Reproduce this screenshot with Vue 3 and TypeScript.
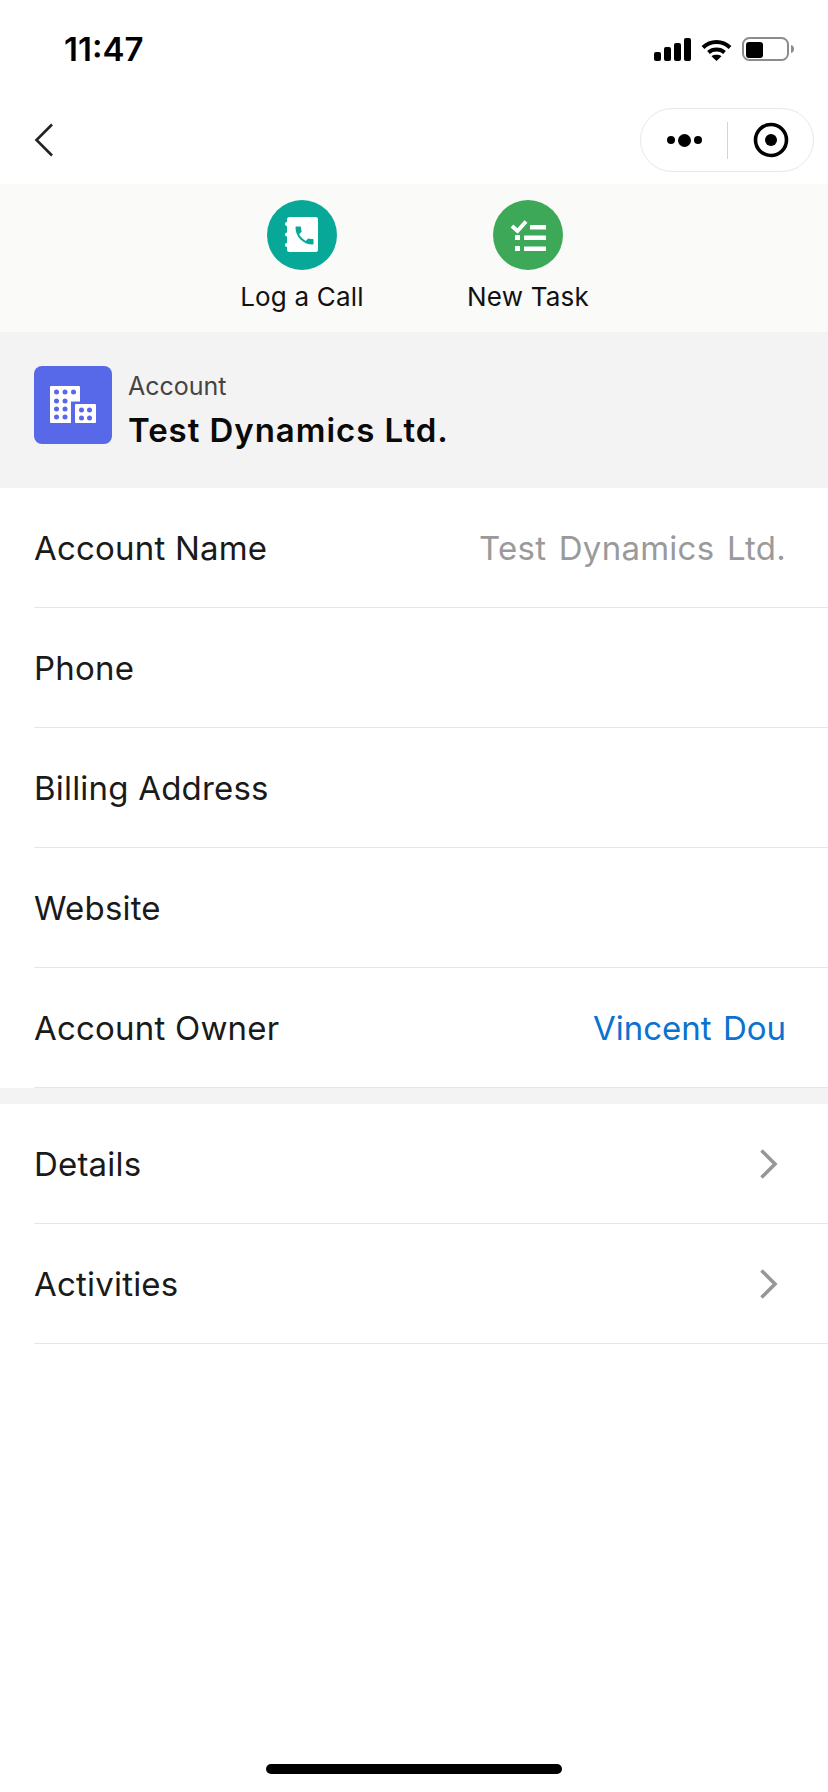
<script setup lang="ts">
interface Row {
  label: string
  value?: string
  link?: boolean
}

const fields: Row[] = [
  { label: 'Account Name', value: 'Test Dynamics Ltd.' },
  { label: 'Phone' },
  { label: 'Billing Address' },
  { label: 'Website' },
  { label: 'Account Owner', value: 'Vincent Dou', link: true },
]

const links: string[] = ['Details', 'Activities']

const bars = [
  { x: 0, h: 9 },
  { x: 10, h: 14 },
  { x: 20, h: 18 },
  { x: 30, h: 23 },
]

const bigDots: [number, number][] = [
  [22.5, 26], [31, 26], [39.5, 26],
  [22.5, 35], [31, 35],
  [22.5, 43], [31, 43],
  [22.5, 51], [31, 51],
]
const smallDots: [number, number][] = [
  [47.5, 44], [55.5, 44],
  [47.5, 52], [55.5, 52],
]
</script>

<template>
  <div class="page">
    <div class="status">
      <span class="time">11:47</span>
      <div class="status-icons">
        <svg width="37" height="23" viewBox="0 0 37 23">
          <rect v-for="b in bars" :key="b.x" :x="b.x" :y="23 - b.h" width="7" :height="b.h" rx="2" fill="#000" />
        </svg>
        <svg width="31" height="24" viewBox="0 0 31 24">
          <path d="M2 10.5C9.5 3.2 21.5 3.2 29 10.5" fill="none" stroke="#000" stroke-width="4" />
          <path d="M7.5 15.5C11.8 11.6 19.2 11.6 23.5 15.5" fill="none" stroke="#000" stroke-width="4" />
          <path d="M10.5 19.2C13.2 17.4 17.8 17.4 20.5 19.2L15.5 24Z" fill="#000" />
        </svg>
        <svg width="52" height="24" viewBox="0 0 52 24">
          <rect x="1" y="1" width="45" height="22" rx="6.5" fill="none" stroke="#8c8c8c" stroke-width="2" />
          <rect x="4" y="5" width="17" height="16" rx="3" fill="#000" />
          <path d="M49 8C51 8.5 52 10 52 12S51 15.500 49 16Z" fill="#8c8c8c" />
        </svg>
      </div>
    </div>

    <div class="nav">
      <svg width="20" height="34" viewBox="0 0 20 34">
        <path d="M18 1.500L2.500 17L18 32.500" fill="none" stroke="#222" stroke-width="2.600" />
      </svg>
      <div class="capsule">
        <div class="more">
          <i class="dot" /><i class="dot big" /><i class="dot" />
        </div>
        <span class="divider" />
        <svg width="36" height="36" viewBox="0 0 36 36">
          <circle cx="18" cy="18" r="15.500" fill="none" stroke="#000" stroke-width="3.600" />
          <circle cx="18" cy="18" r="6" fill="#000" />
        </svg>
      </div>
    </div>

    <div class="actions">
      <div class="action">
        <span class="circle teal">
          <svg width="70" height="70" viewBox="0 0 70 70">
            <rect x="20" y="17" width="31" height="35" rx="2.500" fill="#fff" />
            <rect x="18" y="22" width="5" height="4" rx="2" fill="#fff" />
            <rect x="18" y="32.500" width="5" height="4" rx="2" fill="#fff" />
            <rect x="18" y="43" width="5" height="4" rx="2" fill="#fff" />
            <path transform="translate(25.500 23.500)" d="M6.620 10.790c1.440 2.830 3.760 5.140 6.590 6.590l2.200-2.200c.27-.27.67-.36 1.020-.24 1.120.37 2.330.57 3.570.57.550 0 1 .45 1 1V20c0 .55-.45 1-1 1-9.390 0-17-7.610-17-17 0-.55.45-1 1-1h3.500c.55 0 1 .45 1 1 0 1.250.2 2.450.57 3.570.11.350.03.740-.25 1.020l-2.200 2.200z" fill="#08a899" />
          </svg>
        </span>
        <span class="action-label">Log a Call</span>
      </div>
      <div class="action">
        <span class="circle green">
          <svg width="70" height="70" viewBox="0 0 70 70">
            <path d="M19 26L24.500 31L33 21.500" fill="none" stroke="#fff" stroke-width="4" />
            <rect x="37" y="25" width="16" height="4.500" rx="0.500" fill="#fff" />
            <rect x="22" y="35" width="5" height="5" rx="0.500" fill="#fff" />
            <rect x="31" y="35.500" width="22" height="4.500" rx="0.500" fill="#fff" />
            <rect x="22" y="46" width="5" height="5" rx="0.500" fill="#fff" />
            <rect x="31" y="46.500" width="22" height="4.500" rx="0.500" fill="#fff" />
          </svg>
        </span>
        <span class="action-label">New Task</span>
      </div>
    </div>

    <div class="record">
      <div class="avatar">
        <svg width="78" height="78" viewBox="0 0 78 78">
          <path d="M16 21a1 1 0 0 1 1-1H45a1 1 0 0 1 1 1V35.500H37V57H17a1 1 0 0 1-1-1Z" fill="#fff" />
          <rect x="41" y="38" width="21" height="19" rx="1" fill="#fff" />
          <circle v-for="d in bigDots" :key="d.join()" :cx="d[0]" :cy="d[1]" r="2.500" fill="#5768e9" />
          <circle v-for="d in smallDots" :key="d.join()" :cx="d[0]" :cy="d[1]" r="2.500" fill="#5768e9" />
        </svg>
      </div>
      <div class="record-text">
        <span class="record-type">Account</span>
        <span class="record-name">Test Dynamics Ltd.</span>
      </div>
    </div>

    <div class="list">
      <div v-for="f in fields" :key="f.label" class="row">
        <span class="row-label">{{ f.label }}</span>
        <span v-if="f.value" class="row-value" :class="{ link: f.link }">{{ f.value }}</span>
      </div>
    </div>

    <div class="gap" />

    <div class="list">
      <div v-for="l in links" :key="l" class="row">
        <span class="row-label">{{ l }}</span>
        <svg class="chev" width="20" height="30" viewBox="0 0 20 30">
          <path d="M2.500 1.500L16 15L2.500 28.500" fill="none" stroke="#979797" stroke-width="3.600" />
        </svg>
      </div>
    </div>

    <div class="home" />
  </div>
</template>

<style scoped>
.page {
  position: relative;
  width: 828px;
  height: 1792px;
  overflow: hidden;
  background: #fff;
  color: #1a1a1a;
  font-family: Inter, "Noto Sans", sans-serif;
}

.status {
  height: 88px;
  padding: 10px 34px 0 64px;
  box-sizing: border-box;
  display: flex;
  align-items: center;
  justify-content: space-between;
}
.time { font-size: 33px; font-weight: 600; color: #000; }
.status-icons { display: flex; align-items: center; gap: 10px; }
.status-icons svg { display: block; }

.nav {
  height: 96px;
  padding: 8px 14px 0 34px;
  box-sizing: border-box;
  display: flex;
  align-items: center;
  justify-content: space-between;
}
.capsule {
  width: 174px;
  height: 64px;
  box-sizing: border-box;
  border: 1px solid #e8e8e8;
  border-radius: 32px;
  display: flex;
  align-items: center;
  padding-left: 26px;
}
.more { display: flex; align-items: center; gap: 3px; width: 60px; }
.dot { width: 8px; height: 8px; border-radius: 50%; background: #000; }
.dot.big { width: 13px; height: 13px; }
.divider { width: 1px; height: 37px; background: #d4d4d4; margin-right: 25px; }

.actions {
  height: 148px;
  background: #fafaf8;
  display: flex;
  justify-content: center;
  padding: 16px 0 0 2px;
  box-sizing: border-box;
}
.action {
  width: 226px;
  display: flex;
  flex-direction: column;
  align-items: center;
  gap: 8px;
}
.circle { width: 70px; height: 70px; border-radius: 50%; display: block; }
.circle svg { display: block; }
.teal { background: #08a899; }
.green { background: #3da857; }
.action-label { font-size: 26px; line-height: 38px; letter-spacing: 0.2px; color: #111; }

.record {
  height: 156px;
  background: #f3f3f3;
  padding: 34px 34px 0;
  box-sizing: border-box;
  display: flex;
  align-items: flex-start;
  gap: 16px;
}
.avatar { width: 78px; height: 78px; border-radius: 8px; background: #5768e9; }
.avatar svg { display: block; }
.record-text { display: flex; flex-direction: column; gap: 6px; margin-top: 3px; }
.record-type { font-size: 25px; line-height: 34px; color: #444; }
.record-name { font-size: 33px; line-height: 42px; font-weight: 600; letter-spacing: 0.95px; color: #0a0a0a; }

.list { padding-left: 34px; }
.row {
  height: 120px;
  box-sizing: border-box;
  border-bottom: 1px solid #e6e6e6;
  padding-right: 42px;
  display: flex;
  align-items: center;
  justify-content: space-between;
}
.row-label { font-size: 33px; letter-spacing: 0.2px; }
.row-value { font-size: 33px; letter-spacing: 0.25px; word-spacing: 3px; color: #9a9a9a; }
.row-value.link { color: #0a72cf; letter-spacing: 0; word-spacing: 2px; }
.chev { margin-right: 7px; }

.gap { height: 16px; background: #f3f3f3; }

.home {
  position: absolute;
  left: 266px;
  bottom: 18px;
  width: 296px;
  height: 10px;
  border-radius: 5px;
  background: #000;
}
</style>
